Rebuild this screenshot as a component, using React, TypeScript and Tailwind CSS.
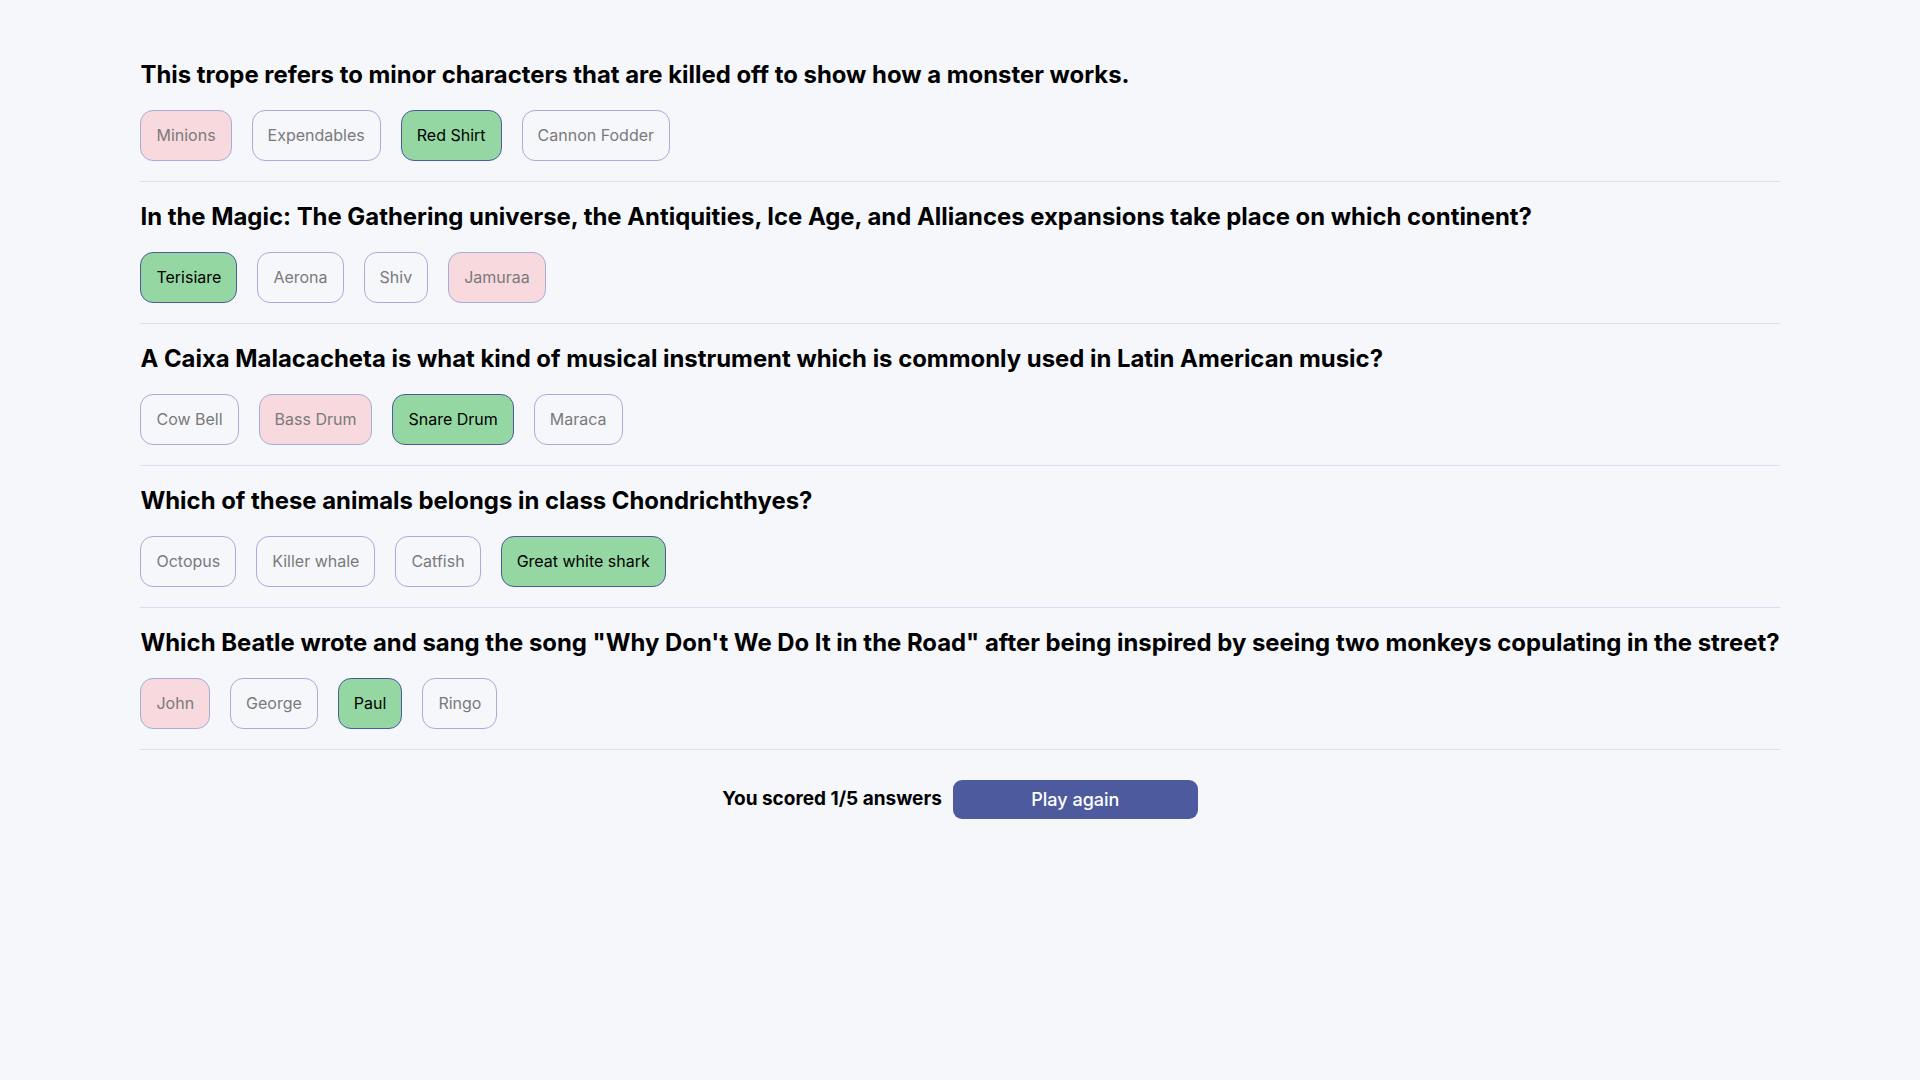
import React from "react";

type Q = { q: string; answers: { t: string; s: "none" | "correct" | "wrong" }[] };

const questions: Q[] = [
  {
    q: "This trope refers to minor characters that are killed off to show how a monster works.",
    answers: [
      { t: "Minions", s: "wrong" },
      { t: "Expendables", s: "none" },
      { t: "Red Shirt", s: "correct" },
      { t: "Cannon Fodder", s: "none" },
    ],
  },
  {
    q: "In the Magic: The Gathering universe, the Antiquities, Ice Age, and Alliances expansions take place on which continent?",
    answers: [
      { t: "Terisiare", s: "correct" },
      { t: "Aerona", s: "none" },
      { t: "Shiv", s: "none" },
      { t: "Jamuraa", s: "wrong" },
    ],
  },
  {
    q: "A Caixa Malacacheta is what kind of musical instrument which is commonly used in Latin American music?",
    answers: [
      { t: "Cow Bell", s: "none" },
      { t: "Bass Drum", s: "wrong" },
      { t: "Snare Drum", s: "correct" },
      { t: "Maraca", s: "none" },
    ],
  },
  {
    q: "Which of these animals belongs in class Chondrichthyes?",
    answers: [
      { t: "Octopus", s: "none" },
      { t: "Killer whale", s: "none" },
      { t: "Catfish", s: "none" },
      { t: "Great white shark", s: "correct" },
    ],
  },
  {
    q: 'Which Beatle wrote and sang the song "Why Don\'t We Do It in the Road" after being inspired by seeing two monkeys copulating in the street?',
    answers: [
      { t: "John", s: "wrong" },
      { t: "George", s: "none" },
      { t: "Paul", s: "correct" },
      { t: "Ringo", s: "none" },
    ],
  },
];

function Answer({ t, s }: { t: string; s: "none" | "correct" | "wrong" }) {
  const cls =
    s === "correct"
      ? "bg-[#94d7a2] border-[#4d5b9e] text-black"
      : s === "wrong"
      ? "bg-[#f8d9dd] border-[#a6addb] text-[#7a7a7c]"
      : "bg-[#f5f7fb] border-[#a6addb] text-[#7a7a7c]";
  return (
    <button
      className={`border rounded-[13px] px-[15px] py-3 text-[16px] leading-[25px] whitespace-nowrap ${cls}`}
    >
      {t}
    </button>
  );
}

export default function App() {
  return (
    <div
      className="min-h-screen w-full bg-[#f5f7fb] text-black"
      style={{ fontFamily: "Inter, 'Noto Sans', sans-serif" }}
    >
      <div className="mx-auto w-fit pt-[40px]">
        {questions.map((q, i) => (
          <div key={i} className="flex flex-col gap-5 py-5 border-b border-[#dbdef0]">
            <h2 className="text-[23.9px] leading-[30px] font-bold whitespace-nowrap">{q.q}</h2>
            <div className="flex gap-5">
              {q.answers.map((a, j) => (
                <Answer key={j} t={a.t} s={a.s} />
              ))}
            </div>
          </div>
        ))}
        <div className="flex items-center justify-center gap-[11px] pt-[30px]">
          <span className="text-[19px] font-bold">You scored 1/5 answers</span>
          <button className="w-[245px] h-[39px] rounded-[9px] bg-[#4d5b9e] text-white text-[18px] font-medium">
            Play again
          </button>
        </div>
      </div>
    </div>
  );
}
